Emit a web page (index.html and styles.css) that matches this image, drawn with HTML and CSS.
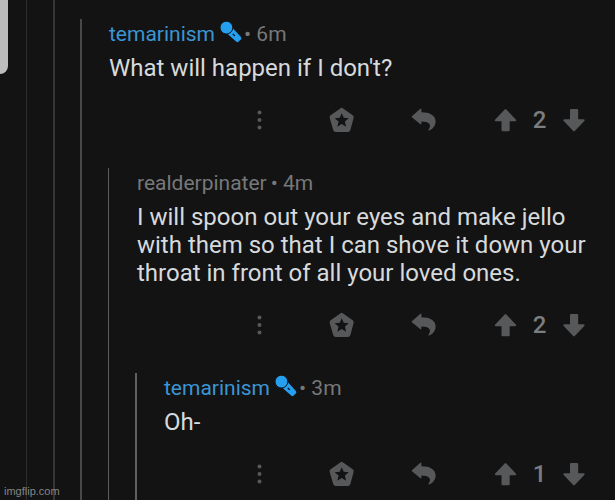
FILE: index.html
```html
<!DOCTYPE html>
<html lang="en">
<head>
<meta charset="utf-8">
<title>Comment thread</title>
<link rel="stylesheet" href="styles.css">
</head>
<body>
<svg class="symbols" aria-hidden="true">
  <symbol id="mic" viewBox="0 0 22 22">
    <path d="M7 12.6 12.9 7.2 20.9 16Q21.8 17.2 20.9 18.3L18.7 20.6Q17.6 21.7 16.4 20.7Z"/>
    <circle class="head" cx="6.4" cy="6.6" r="6.4"/>
    <path class="cut" d="M12.8 13l2 1.9"/>
  </symbol>
  <symbol id="more" viewBox="0 0 24 24">
    <circle cx="12.5" cy="4.5" r="2"/><circle cx="12.5" cy="12" r="2"/><circle cx="12.5" cy="19.5" r="2"/>
  </symbol>
  <symbol id="award" viewBox="0 0 24 24">
    <path fill-rule="evenodd" d="M11.3.4Q12.7-.7 14.1.4L23.7 7.2Q25.2 8.3 24.6 9.9L21.4 21.9Q20.8 24 18.8 24H6.8Q4.8 24 4.2 21.9L.7 9.9Q.2 8.3 1.6 7.2ZM12.7 5.2 10.8 9.8 5.6 10.2 9.6 13.5 8.3 18.7 12.7 15.9 17.1 18.7 15.9 13.5 19.8 10.2 14.7 9.8Z"/>
  </symbol>
  <symbol id="reply" viewBox="0 0 24 24">
    <path d="M.9 8.2 9.1.9Q10.4 0 10.4 1.5V4.2C19 4.2 24.6 7.5 24.6 13.5 24.6 18 21.3 21.6 18 22.4 17.3 22.6 17.1 22.2 17.5 21.8 21.2 16.8 18 13.6 10.4 13.6V15.4Q10.4 17 9.1 16L.9 9.3Q.3 8.7.9 8.2Z"/>
  </symbol>
  <symbol id="up" viewBox="0 0 24 24">
    <path d="M11.7 1.4Q12.5.5 13.3 1.4L22.8 11.5Q23.9 13.2 22 13.2H16.7V22Q16.7 23.2 15.5 23.2H9.7Q8.5 23.2 8.5 22V13.2H3Q1.1 13.2 2.2 11.5Z"/>
  </symbol>
  <symbol id="down" viewBox="0 0 24 24">
    <path d="M11.2 23Q12 23.9 12.8 23L22.3 12.9Q23.4 11.2 21.5 11.2H16.2V2Q16.2 1 15 1H9.2Q8 1 8 2V11.2H2.5Q.6 11.2 1.7 12.9Z"/>
  </symbol>
</svg>

<div class="corner-card"></div>

<main class="level level-outer">
  <div class="level level-second">
    <div class="thread thread-strong">
      <article class="comment">
        <header class="meta"><a class="author" href="#">temarinism</a><svg class="badge"><use href="#mic"/></svg><span class="time">• 6m</span></header>
        <p class="text">What will happen if I don't?</p>
        <footer class="actions">
          <button aria-label="More"><svg><use href="#more"/></svg></button>
          <button aria-label="Give award"><svg><use href="#award"/></svg></button>
          <button aria-label="Reply"><svg><use href="#reply"/></svg></button>
          <div class="votes">
            <button aria-label="Upvote"><svg><use href="#up"/></svg></button>
            <span class="score">2</span>
            <button aria-label="Downvote"><svg><use href="#down"/></svg></button>
          </div>
        </footer>
      </article>

      <div class="thread thread-fine">
        <article class="comment">
          <header class="meta"><a class="author muted" href="#">realderpinater</a><span class="time spaced">• 4m</span></header>
          <p class="text">I will spoon out your eyes and make jello with them so that I can shove it down your throat in front of all your loved ones.</p>
          <footer class="actions">
            <button aria-label="More"><svg><use href="#more"/></svg></button>
            <button aria-label="Give award"><svg><use href="#award"/></svg></button>
            <button aria-label="Reply"><svg><use href="#reply"/></svg></button>
            <div class="votes">
              <button aria-label="Upvote"><svg><use href="#up"/></svg></button>
              <span class="score">2</span>
              <button aria-label="Downvote"><svg><use href="#down"/></svg></button>
            </div>
          </footer>
        </article>

        <div class="thread thread-last">
          <article class="comment">
            <header class="meta"><a class="author" href="#">temarinism</a><svg class="badge"><use href="#mic"/></svg><span class="time">• 3m</span></header>
            <p class="text">Oh-</p>
            <footer class="actions">
              <button aria-label="More"><svg><use href="#more"/></svg></button>
              <button aria-label="Give award"><svg><use href="#award"/></svg></button>
              <button aria-label="Reply"><svg><use href="#reply"/></svg></button>
              <div class="votes">
                <button aria-label="Upvote"><svg><use href="#up"/></svg></button>
                <span class="score">1</span>
                <button aria-label="Downvote"><svg><use href="#down"/></svg></button>
              </div>
            </footer>
          </article>
        </div>
      </div>
    </div>
  </div>
</main>
<div class="watermark">imgflip.com</div>
</body>
</html>
```
FILE: styles.css
```css
* { box-sizing: border-box; }

body {
  margin: 0;
  background: #131313;
  color: #d7dadc;
  font-family: Roboto, "Liberation Sans", sans-serif;
  overflow-x: hidden;
}

.symbols { position: absolute; width: 0; height: 0; }
.cut { fill: none; stroke: #131313; stroke-width: 1.3; }
.head { stroke: #131313; stroke-width: 1; }

.corner-card {
  position: absolute;
  top: 0;
  left: 0;
  width: 8px;
  height: 74px;
  background: #bcbcbc;
  border-bottom-right-radius: 8px;
}

.level { display: grid; }
.level-outer { margin-left: 26px; border-left: 1px solid #2e2e2e; min-height: 100vh; }
.level-second { margin-left: 26px; border-left: 2px solid #363636; padding-top: 19px; }

.thread { display: flex; flex-direction: column; }
.thread-strong { margin-left: 25px; border-left: 2px solid #484848; }
.thread-fine { margin-left: 26px; border-left: 1px solid #5c5c5c; flex: 1; }
.thread-last { margin-left: 26px; border-left: 2px solid #606060; flex: 1; }

.comment { padding: 0 29px 28px 27px; }
.thread-fine > .comment { padding-left: 28px; }
.thread-last > .comment { padding-bottom: 6px; }

.meta {
  display: flex;
  align-items: center;
  height: 30px;
  font-size: 21px;
  line-height: 30px;
  color: #77787a;
}
.author { color: #3c95d3; text-decoration: none; }
.author.muted { color: #77787a; }
.badge { width: 22px; height: 22px; margin: 0 2px 4px 5px; fill: #259ff0; overflow: visible; }
.spaced { margin-left: 4px; }

.text { margin: 5px 0 18px; font-size: 24px; line-height: 28px; }

.actions {
  display: flex;
  justify-content: flex-end;
  align-items: center;
  gap: 58px;
  height: 40px;
}
.actions button {
  width: 24px;
  height: 24px;
  padding: 0;
  border: 0;
  background: none;
  color: #57585a;
}
.actions svg { display: block; width: 24px; height: 24px; fill: currentColor; overflow: visible; }
#award, #reply, #mic { overflow: visible; }
.votes { display: flex; align-items: center; }
.score { width: 45px; text-align: center; font-size: 24px; line-height: 28px; font-weight: 500; color: #7c7d7f; }

.watermark {
  position: absolute;
  left: 4px;
  bottom: 1px;
  font: 11px/16px "Liberation Sans", sans-serif;
  color: #858585;
}
```
